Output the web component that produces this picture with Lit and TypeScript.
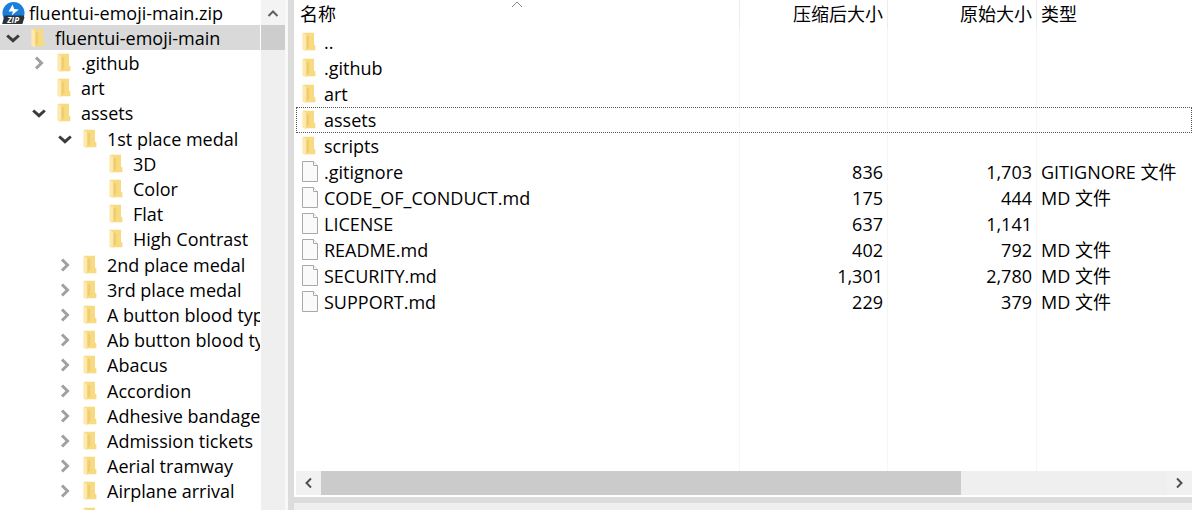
import { LitElement, html, css, svg, nothing } from "lit";
import { customElement } from "lit/decorators.js";
import { classMap } from "lit/directives/class-map.js";

type Fold = "open" | "closed" | "none";
interface Node { name: string; level: number; fold: Fold; }
interface Entry { name: string; packed?: string; size?: string; type?: string; folder?: boolean; }

const tree: Node[] = [
  { name: "fluentui-emoji-main", level: 1, fold: "open" },
  { name: ".github", level: 2, fold: "closed" },
  { name: "art", level: 2, fold: "none" },
  { name: "assets", level: 2, fold: "open" },
  { name: "1st place medal", level: 3, fold: "open" },
  { name: "3D", level: 4, fold: "none" },
  { name: "Color", level: 4, fold: "none" },
  { name: "Flat", level: 4, fold: "none" },
  { name: "High Contrast", level: 4, fold: "none" },
  ...["2nd place medal", "3rd place medal", "A button blood type", "Ab button blood type", "Abacus",
    "Accordion", "Adhesive bandage", "Admission tickets", "Aerial tramway", "Airplane arrival",
    "Airplane departure"].map((name): Node => ({ name, level: 3, fold: "closed" })),
];

const entries: Entry[] = [
  { name: "..", folder: true },
  { name: ".github", folder: true },
  { name: "art", folder: true },
  { name: "assets", folder: true },
  { name: "scripts", folder: true },
  { name: ".gitignore", packed: "836", size: "1,703", type: "GITIGNORE 文件" },
  { name: "CODE_OF_CONDUCT.md", packed: "175", size: "444", type: "MD 文件" },
  { name: "LICENSE", packed: "637", size: "1,141" },
  { name: "README.md", packed: "402", size: "792", type: "MD 文件" },
  { name: "SECURITY.md", packed: "1,301", size: "2,780", type: "MD 文件" },
  { name: "SUPPORT.md", packed: "229", size: "379", type: "MD 文件" },
];

const folderIcon = html`<svg class="folder" width="14" height="20" viewBox="0 0 14 20" aria-hidden="true">
  <path d="M1 0.8H12V12.5L13.4 13.6V18.2H4Z" fill="#f8db80"/>
  <path d="M4.2 3.2L7.2 4.6V14.5L4.2 18.5Z" fill="#f0cd70"/>
  <path d="M0.4 0.8L4.2 3V19.4L0.4 17.8Z" fill="#fde9ae"/>
</svg>`;

const fileIcon = html`<svg class="file" width="17" height="22" viewBox="0 0 17 22" aria-hidden="true">
  <path d="M0.5 0.5H11.5L15.5 4.5V20.5H0.5Z" fill="#fafafa" stroke="#a8a8a8"/>
  <path d="M11.5 0.5V4.5H15.5" fill="#fff" stroke="#a8a8a8"/>
</svg>`;

const zipIcon = html`<svg class="zip" width="24" height="24" viewBox="0 0 24 24" aria-hidden="true">
  <circle cx="12.5" cy="12" r="11" fill="#1a7fdc"/>
  <path d="M3.4 14.4H22.6L23.4 16.4L21.4 23H1.2Z" fill="#2c3238"/>
  <path d="M11.6 3.6L7.6 10.4L12 10.4L10.6 14.4L17.8 8.6L13.2 8Z" fill="#fff"/>
  <text x="12.2" y="22" text-anchor="middle" class="ziptext">ZIP</text>
</svg>`;

const chevron = (d: string, cls: string) => html`<svg class=${cls} width="14" height="14" viewBox="0 0 14 14" aria-hidden="true">${svg`<path d=${d} fill="none" stroke="currentColor"/>`}</svg>`;
const DOWN = "M1.2 4.5L7 9.7L12.8 4.5";
const RIGHT = "M4 1.5L9.5 7L4 12.5";

@customElement("folder-tree")
export class FolderTree extends LitElement {
  static styles = css`
    :host { display: flex; min-width: 0; overflow: hidden; }
    .list { flex: 1; min-width: 0; margin: 0; padding: 0; list-style: none; overflow: hidden; border-right: 1px solid #fff; }
    .row { display: flex; align-items: center; height: 25px; white-space: nowrap; }
    .row:nth-child(5n) { margin-bottom: 1px; }
    .selected { background: #d9d9d9; }
    .l2 { padding-left: 26px; }
    .l3 { padding-left: 52px; }
    .l4 { padding-left: 78px; }
    .slot { flex: none; display: flex; align-items: center; justify-content: center; width: 26px; height: 25px; padding: 0; border: 0; background: none; color: #a0a0a0; }
    .open { color: #3c3c3c; }
    .book { width: 24px; }
    .toggle path { stroke-width: 3; }
    .label { margin-left: 5px; }
    .zip { flex: none; margin: 0 4px 0 1px; }
    .ziptext { font: italic 700 8px "Open Sans", sans-serif; fill: #fff; }
    .track { flex: none; display: flex; flex-direction: column; width: 24px; background: #efefef; }
    .arrow { display: flex; align-items: center; justify-content: center; height: 25px; padding: 0; border: 0; background: #f3f3f3; color: #606060; }
    .arrow path { stroke-width: 2; }
    .thumb { height: 25px; background: #cdcdcd; }
  `;
  render() {
    return html`
      <ul class="list" role="tree" aria-label="fluentui-emoji-main.zip">
        <li class="row" role="treeitem">${zipIcon}<span>fluentui-emoji-main.zip</span></li>
        ${tree.map((n, i) => html`<li role="treeitem" aria-level=${n.level} class=${classMap({ row: true, selected: i === 0, [`l${n.level}`]: true })}>
          ${n.fold === "none"
            ? html`<span class="slot"></span>`
            : html`<button class=${classMap({ slot: true, open: n.fold === "open" })} aria-label=${n.name}>${chevron(n.fold === "open" ? DOWN : RIGHT, "toggle")}</button>`}
          <span class="slot book">${folderIcon}</span><span class="label">${n.name}</span>
        </li>`)}
      </ul>
      <div class="track">
        <button class="arrow" aria-label="Up">${chevron("M2.5 10L7 5.5L11.5 10", "")}</button>
        <div class="thumb"></div>
      </div>`;
  }
}

@customElement("file-list")
export class FileList extends LitElement {
  static styles = css`
    :host { display: flex; flex-direction: column; min-width: 0; min-height: 0; }
    .view { flex: 1; min-height: 0; position: relative; display: grid; padding-left: 2px; }
    .sort { position: absolute; left: 215px; top: -1px; color: #8a8a8a; }
    .grid { width: 100%; height: 100%; table-layout: fixed; border-collapse: separate; border-spacing: 0; }
    .packed { width: 148px; }
    .size { width: 149px; }
    .type { width: 155px; }
    .cell { box-sizing: border-box; height: 26px; padding: 0 4px; font-weight: 400; text-align: left; white-space: nowrap; border-right: 1px solid #f6f6f6; }
    .head .cell { height: 29px; padding-bottom: 1px; border-right-color: #ececec; }
    .cell:last-child { border-right: 0; }
    .cell.num { text-align: right; }
    .name { display: flex; align-items: center; gap: 4px; height: 24px; }
    .icon { flex: none; display: flex; width: 20px; padding-left: 2px; box-sizing: border-box; }
    .focus { outline: 1px dotted #555; outline-offset: -1px; }
    .rest { height: auto; }
    .bar { flex: none; display: flex; height: 24px; margin: 0 0 2px 2px; background: #efefef; }
    .arrow { display: flex; align-items: center; justify-content: center; width: 25px; padding: 0; border: 0; background: #f1f1f1; color: #505050; }
    .arrow path { stroke-width: 2; }
    .rail { flex: 1; display: grid; grid-template-columns: 3.1fr 1fr; }
    .thumb { background: #cbcbcb; }
    .foot { flex: none; height: 7px; border-top: 6px solid #dcdcdc; background: #efefef; }
  `;
  render() {
    return html`
      <div class="view">
        <table class="grid">
          <colgroup><col><col class="packed"><col class="size"><col class="type"></colgroup>
          <thead><tr class="head">
            <th class="cell">名称</th><th class="cell num">压缩后大小</th><th class="cell num">原始大小</th><th class="cell">类型</th>
          </tr></thead>
          <tbody>
            ${entries.map((e) => html`<tr class=${e.name === "assets" ? "focus" : nothing}>
              <td class="cell"><div class="name"><span class="icon">${e.folder ? folderIcon : fileIcon}</span>${e.name}</div></td>
              <td class="cell num">${e.packed}</td><td class="cell num">${e.size}</td><td class="cell">${e.type}</td>
            </tr>`)}
            <tr aria-hidden="true"><td class="cell rest"></td><td class="cell rest"></td><td class="cell rest"></td><td class="cell rest"></td></tr>
          </tbody>
        </table>
        <svg class="sort" width="16" height="12" viewBox="0 0 16 12" aria-hidden="true"><path d="M3 8L8 3L13 8" fill="none" stroke="currentColor"/></svg>
      </div>
      <div class="bar">
        <button class="arrow" aria-label="Left">${chevron("M9 2.5L4.5 7L9 11.5", "")}</button>
        <div class="rail"><div class="thumb"></div></div>
        <button class="arrow" aria-label="Right">${chevron("M4 2.5L8.5 7L4 11.5", "")}</button>
      </div>
      <div class="foot"></div>`;
  }
}

@customElement("app-root")
export class AppRoot extends LitElement {
  static styles = css`
    :host { display: grid; grid-template-columns: 285px 9px minmax(0, 1fr); grid-template-rows: 100%; height: 100vh; overflow: hidden; background: #fff; color: #000; font: 18px/24px "Open Sans", "Noto Sans CJK SC", sans-serif; }
    .splitter { box-sizing: border-box; background: #dcdcdc; border-left: 3px solid #f8f8f8; }
  `;
  render() {
    return html`<folder-tree></folder-tree><div class="splitter"></div><file-list></file-list>`;
  }
}
